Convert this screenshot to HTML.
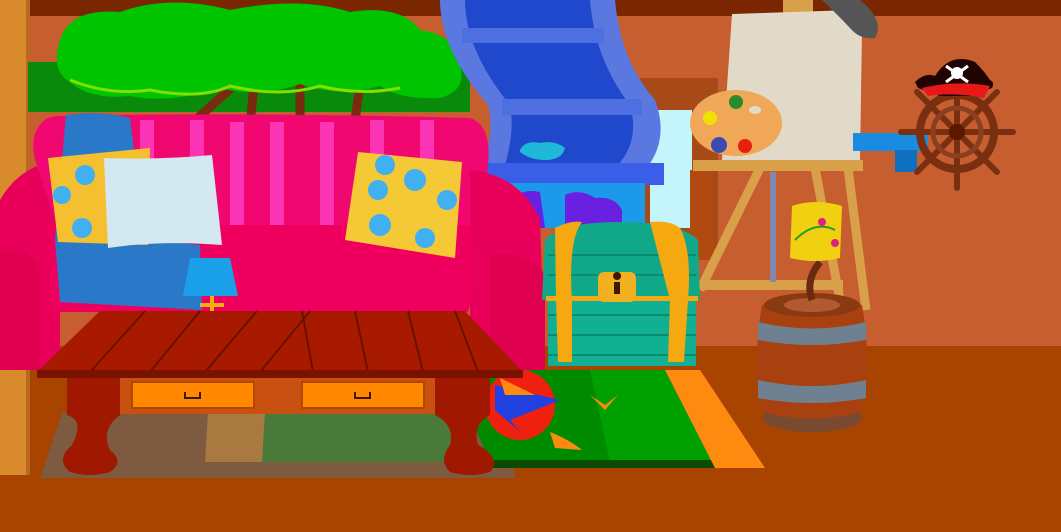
<!DOCTYPE html>
<html><head><meta charset="utf-8"><style>html,body{margin:0;padding:0;width:1061px;height:532px;overflow:hidden;background:#c65e30}svg{display:block}</style></head>
<body>
<svg width="1061" height="532" viewBox="0 0 1061 532" xmlns="http://www.w3.org/2000/svg">
<rect x="0" y="0" width="1061" height="532" fill="#c65e30"/>
<rect x="0" y="0" width="1061" height="16" fill="#7a2600"/>
<rect x="0" y="346" width="1061" height="186" fill="#a84300"/>
<rect x="0" y="0" width="26" height="475" fill="#d98a2c"/>
<rect x="26" y="0" width="4" height="475" fill="#b86a20"/>
<!-- window -->
<rect x="640" y="78" width="78" height="180" fill="#a84a18"/>
<rect x="650" y="110" width="42" height="118" fill="#c4f4fc"/>
<rect x="690" y="170" width="24" height="90" fill="#b04a10"/>
<!-- tree -->
<path d="M28 62 H470 V112 H28 Z" fill="#0a8a0a"/>
<path d="M190 125 L240 80 M250 125 L255 75 M300 125 L300 65 M355 120 L360 85" stroke="#7a2a10" stroke-width="9"/>
<path d="M60 40 Q70 8 120 12 Q170 -6 230 10 Q300 -4 350 12 Q400 4 420 30 Q455 35 458 60 Q470 90 440 98 Q400 100 380 86 Q340 98 300 84 Q260 98 220 88 Q170 104 130 96 Q90 100 70 82 Q50 70 60 40 Z" fill="#00c400"/>
<path d="M70 80 Q110 96 150 90 Q200 100 230 86 Q280 98 320 86 Q360 96 400 88" stroke="#80e000" stroke-width="3" fill="none"/>
<!-- shelf -->
<path d="M440 0 H615 Q620 60 655 100 Q670 140 645 170 L482 170 Q495 130 488 105 Q440 50 440 0 Z" fill="#5a78e0"/>
<path d="M465 0 H590 Q595 60 630 105 Q640 140 618 165 L505 165 Q515 130 510 105 Q465 50 465 0 Z" fill="#1f48cc"/>
<rect x="462" y="28" width="142" height="15" fill="#4e6fe0"/>
<rect x="502" y="99" width="140" height="16" fill="#4e6fe0"/>
<rect x="480" y="163" width="184" height="22" fill="#3a5ee8"/>
<rect x="485" y="183" width="160" height="45" fill="#1a9ae8"/>
<path d="M515 200 Q520 188 540 192 L545 228 H515 Z M565 195 Q580 188 595 198 Q615 196 622 210 L622 228 H565 Z" fill="#6a20e0"/>
<path d="M520 150 Q525 140 540 143 Q555 140 565 148 Q562 160 545 160 Q530 160 520 152 Z" fill="#20b8d8"/>
<!-- easel -->
<path d="M700 290 L760 168 M848 168 L866 310 M815 168 L840 300" stroke="#d8a048" stroke-width="9"/>
<rect x="695" y="280" width="148" height="10" fill="#d8a048"/>
<rect x="770" y="172" width="6" height="110" fill="#7f88b0"/>
<rect x="783" y="0" width="30" height="14" fill="#d8a048"/>
<path d="M732 14 L852 10 Q862 12 862 30 L860 160 H722 Z" fill="#e2dac8"/>
<rect x="693" y="160" width="170" height="11" fill="#d8a048"/>
<path d="M822 0 H860 Q885 20 875 38 Q860 40 850 28 Q835 12 822 0 Z" fill="#555"/>
<ellipse cx="736" cy="123" rx="46" ry="33" fill="#f0a858"/>
<ellipse cx="755" cy="110" rx="6" ry="4" fill="#e2dac8"/>
<circle cx="710" cy="118" r="7" fill="#f0e000"/>
<circle cx="736" cy="102" r="7" fill="#2a8a30"/>
<circle cx="719" cy="145" r="8" fill="#3a4ab0"/>
<circle cx="745" cy="146" r="7" fill="#e82010"/>
<!-- pirate wheel -->
<rect x="853" y="133" width="75" height="18" fill="#1a8ce0"/>
<rect x="895" y="150" width="22" height="22" fill="#1070c0"/>
<g stroke="#7a3010" stroke-width="6" stroke-linecap="round">
<line x1="957" y1="76" x2="957" y2="188"/><line x1="901" y1="132" x2="1013" y2="132"/>
<line x1="917" y1="92" x2="997" y2="172"/><line x1="997" y1="92" x2="917" y2="172"/>
</g>
<circle cx="957" cy="132" r="37" fill="none" stroke="#7a3010" stroke-width="8"/>
<circle cx="957" cy="132" r="24" fill="none" stroke="#8a4020" stroke-width="5"/>
<circle cx="957" cy="132" r="8" fill="#5a1800"/>
<path d="M915 82 Q925 72 935 76 Q950 52 975 62 Q985 72 990 80 Q995 82 992 88 L970 96 H940 L918 88 Z" fill="#200404"/>
<path d="M922 88 Q955 80 990 86 L984 98 Q955 92 928 96 Z" fill="#e81818"/>
<circle cx="957" cy="73" r="6" fill="#fff"/>
<path d="M946 66 L968 82 M968 66 L946 82" stroke="#fff" stroke-width="3"/>
<!-- sofa -->
<path d="M0 200 Q20 165 60 160 L60 370 L0 370 Z" fill="#e8005a"/>
<path d="M40 125 Q45 116 60 116 Q250 112 470 118 Q492 125 488 165 L480 235 H60 L35 160 Q30 135 40 125 Z" fill="#f00870"/>
<g fill="#ff40c8" opacity="0.8">
<rect x="140" y="120" width="14" height="105"/><rect x="190" y="120" width="14" height="105"/><rect x="230" y="122" width="14" height="105"/>
<rect x="270" y="122" width="14" height="105"/><rect x="320" y="122" width="14" height="105"/><rect x="370" y="120" width="14" height="105"/><rect x="420" y="120" width="14" height="105"/>
</g>
<path d="M470 170 Q520 175 540 220 L545 365 L470 365 Z" fill="#e8005a"/>
<path d="M48 225 H470 Q478 280 468 312 H52 Z" fill="#f0005e"/>
<path d="M0 250 Q30 245 40 270 L40 370 H0 Z" fill="#e00050"/>
<path d="M490 255 Q530 250 545 275 L545 370 H490 Z" fill="#e00050"/>
<path d="M66 115 Q100 110 130 118 L145 240 L200 245 L202 310 L60 302 L55 240 Z" fill="#2a78c8"/>
<path d="M48 158 L150 148 L148 245 L58 242 Z" fill="#f5c030"/>
<path d="M104 158 Q160 160 212 155 L222 245 Q160 240 108 248 Z" fill="#d4e8f2"/>
<path d="M358 152 L462 162 L455 258 L345 240 Z" fill="#f5c835"/>
<g fill="#40b0f0">
<circle cx="85" cy="175" r="10"/><circle cx="62" cy="195" r="9"/><circle cx="82" cy="228" r="10"/>
<circle cx="385" cy="165" r="10"/><circle cx="378" cy="190" r="10"/><circle cx="415" cy="180" r="11"/><circle cx="447" cy="200" r="10"/><circle cx="380" cy="225" r="11"/><circle cx="425" cy="238" r="10"/>
</g>
<!-- lamp -->
<path d="M190 258 H230 L238 296 H183 Z" fill="#1aa0e8"/>
<path d="M212 296 V345 M200 305 H224 M195 325 Q212 350 230 325 M193 345 H232" stroke="#f0b010" stroke-width="4" fill="none"/>
<!-- floor shadow under table -->
<path d="M62 413 H505 L515 478 H40 Z" fill="#7d5a40"/>
<path d="M208 413 H285 L280 462 H205 Z" fill="#a87a40"/>
<path d="M265 413 H470 L475 462 H262 Z" fill="#4a7a3a"/>
<!-- rug -->
<path d="M500 370 H665 L715 468 H500 Z" fill="#00a000"/>
<path d="M450 370 H590 L610 462 H490 Z" fill="#008a00"/>
<rect x="470" y="460" width="245" height="8" fill="#0b4a00"/>
<path d="M665 370 H700 L765 468 H715 Z" fill="#ff8a10"/>
<circle cx="520" cy="405" r="35" fill="#f02010"/>
<path d="M495 385 L560 400 L510 420 L520 432 L495 410 Z" fill="#2040e0"/>
<path d="M500 378 L535 395 L505 395 Z" fill="#ff8a10"/>
<path d="M590 395 L605 405 L618 395 L605 410 Z" fill="#ff8a10"/>
<path d="M550 432 Q570 440 582 450 L555 448 Z" fill="#ff8a10"/>
<!-- chest -->
<path d="M545 240 Q560 222 620 222 Q680 222 698 240 L700 300 H542 Z" fill="#10a888"/>
<rect x="548" y="298" width="148" height="68" fill="#12b092"/>
<g stroke="#0a8a70" stroke-width="2"><line x1="548" y1="255" x2="696" y2="255"/><line x1="548" y1="275" x2="696" y2="275"/><line x1="548" y1="315" x2="696" y2="315"/><line x1="548" y1="335" x2="696" y2="335"/><line x1="548" y1="355" x2="696" y2="355"/></g>
<path d="M555 228 Q570 220 582 222 Q568 240 572 300 L572 362 H558 L556 300 Z" fill="#f5a810"/>
<path d="M650 222 Q670 220 680 228 Q692 250 688 300 L684 362 H668 L670 300 Z" fill="#f5a810"/>
<rect x="546" y="296" width="152" height="5" fill="#f5a810"/>
<rect x="598" y="272" width="38" height="30" rx="6" fill="#f0b020"/>
<path d="M617 280 a4 4 0 1 1 0.1 0 Z" fill="#3a1a00"/><rect x="614" y="282" width="6" height="12" fill="#3a1a00"/>
<!-- table -->
<path d="M100 311 H465 L523 372 H37 Z" fill="#a81a00"/>
<g stroke="#6a1000" stroke-width="2">
<line x1="145" y1="311" x2="90" y2="372"/><line x1="200" y1="311" x2="150" y2="372"/><line x1="257" y1="311" x2="205" y2="372"/><line x1="310" y1="311" x2="260" y2="372"/>
<line x1="302" y1="311" x2="313" y2="372"/><line x1="355" y1="311" x2="368" y2="372"/><line x1="408" y1="311" x2="423" y2="372"/><line x1="455" y1="311" x2="478" y2="372"/>
</g>
<rect x="37" y="370" width="486" height="8" fill="#7a1200"/>
<rect x="67" y="378" width="423" height="36" fill="#c85010"/>
<rect x="132" y="382" width="122" height="26" fill="#ff8800" stroke="#b04800" stroke-width="2"/>
<rect x="302" y="382" width="122" height="26" fill="#ff8800" stroke="#b04800" stroke-width="2"/>
<path d="M185 392 V398 H200 V392 M355 392 V398 H370 V392" stroke="#3a1800" stroke-width="2" fill="none"/>
<path d="M67 378 H120 V415 Q100 430 110 450 Q125 462 110 472 Q90 478 70 472 Q55 460 72 445 Q85 420 67 415 Z" fill="#a01800"/>
<path d="M435 378 H490 V415 Q472 425 478 445 Q502 458 490 472 Q470 478 450 472 Q438 460 450 445 Q455 425 435 415 Z" fill="#a01800"/>
<!-- barrel -->
<ellipse cx="812" cy="418" rx="50" ry="14" fill="#7a4a30"/>
<path d="M762 305 Q812 290 862 305 Q872 360 862 412 Q812 425 762 412 Q752 360 762 305 Z" fill="#a84010"/>
<ellipse cx="812" cy="305" rx="48" ry="12" fill="#8a3a10"/>
<ellipse cx="812" cy="305" rx="28" ry="7" fill="#b05a30"/>
<path d="M758 322 Q812 335 866 322 V340 Q812 350 758 340 Z" fill="#6f8090"/>
<path d="M758 380 Q812 392 866 380 V398 Q812 408 758 398 Z" fill="#6f8090"/>
<path d="M812 300 Q805 280 820 262" stroke="#6a2a10" stroke-width="7" fill="none"/>
<path d="M792 206 Q815 198 842 206 L840 258 Q815 264 790 258 Z" fill="#f0d010"/>
<path d="M795 240 Q815 220 835 230" stroke="#2a9a20" stroke-width="2" fill="none"/>
<circle cx="822" cy="222" r="4" fill="#e02080"/><circle cx="835" cy="243" r="4" fill="#e02080"/>
</svg>
</body></html>
